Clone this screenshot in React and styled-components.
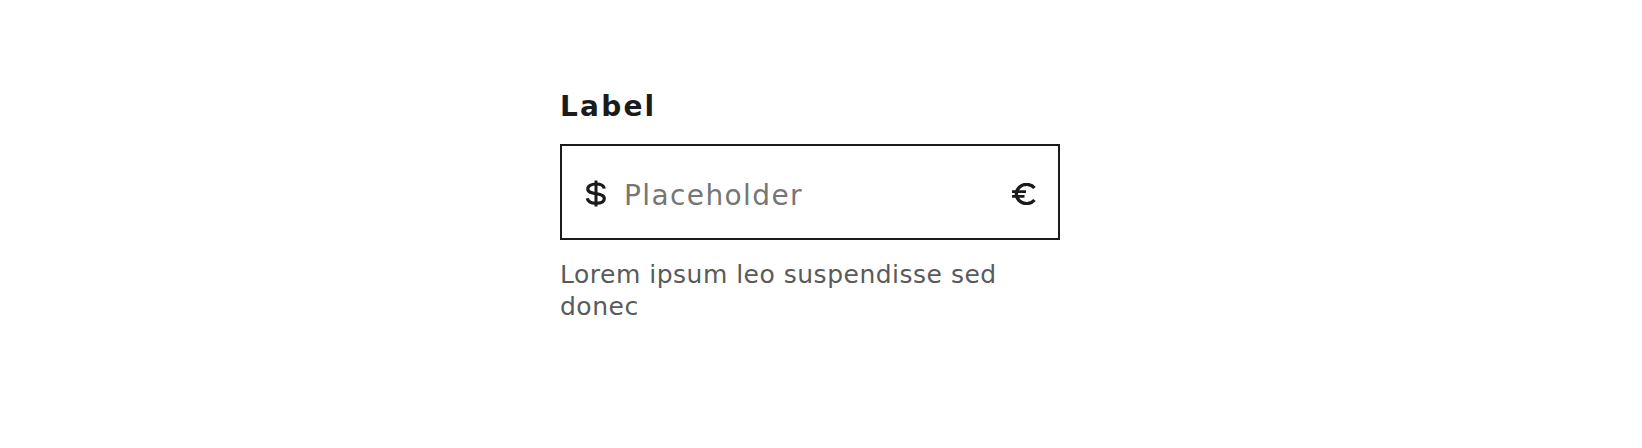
import styled, { createGlobalStyle } from "styled-components";

const GlobalStyle = createGlobalStyle`
  body {
    margin: 0;
    background-color: #ffffff;
    font-family: "DejaVu Sans", "Liberation Sans", sans-serif;
  }
`;

const Page = styled.div`
  display: flex;
  min-height: 448px;
  padding: 91px 0 0 560px;
  box-sizing: border-box;
`;

const Field = styled.div`
  display: flex;
  flex-direction: column;
  width: 500px;
`;

const Label = styled.label`
  margin-bottom: 21px;
  font-size: 28px;
  font-weight: bold;
  line-height: 32px;
  letter-spacing: 2.2px;
  color: #1b1b1b;
`;

const InputBox = styled.div`
  display: flex;
  align-items: center;
  height: 96px;
  padding: 7px 21px 0 23px;
  box-sizing: border-box;
  border: 2px solid #1b1b1b;
  color: #1b1b1b;
`;

const Icon = styled.svg`
  flex-shrink: 0;
  margin-bottom: ${(p) => p.$lift}px;
`;

const TextInput = styled.input`
  flex: 1;
  min-width: 0;
  height: 32px;
  margin-left: 17px;
  padding: 0;
  border: none;
  outline: none;
  background: transparent;
  font-family: "DejaVu Sans", sans-serif;
  font-size: 28px;
  letter-spacing: 1.4px;
  color: #1b1b1b;

  &::placeholder {
    color: #767676;
  }
`;

const Helper = styled.p`
  margin: 19px 0 0;
  font-size: 25px;
  line-height: 32px;
  letter-spacing: 0.5px;
  color: #5a5a5a;
`;

const DollarIcon = () => (
  <Icon $lift={4} width="22" height="27" viewBox="0 0 22 27" fill="none" stroke="currentColor">
    <path d="M11 0.5V26.5" strokeWidth="3" />
    <path
      d="M19.2 8.6C18.8 5.6 15.6 4 11 4C6.2 4 2.8 5.8 2.8 8.9C2.8 12.1 6.2 12.9 11 13.6C15.9 14.3 19.3 15.3 19.3 18.4C19.3 21.6 15.8 23.2 11 23.2C6 23.2 2.8 21.4 2.3 18.2"
      strokeWidth="3.2"
    />
  </Icon>
);

const EuroIcon = () => (
  <Icon $lift={3} width="26" height="22" viewBox="0 0 26 22" fill="none" stroke="currentColor">
    <path d="M23.5 5A10.2 9.6 0 1 0 23.5 17" strokeWidth="3.3" />
    <path d="M1 8.6H15M1 13.4H13.5" strokeWidth="2.8" />
  </Icon>
);

const App = () => {
  return (
    <Page>
      <GlobalStyle />
      <Field>
        <Label htmlFor="amount">Label</Label>
        <InputBox>
          <DollarIcon />
          <TextInput id="amount" type="text" placeholder="Placeholder" />
          <EuroIcon />
        </InputBox>
        <Helper>Lorem ipsum leo suspendisse sed donec</Helper>
      </Field>
    </Page>
  );
};

export default App;
